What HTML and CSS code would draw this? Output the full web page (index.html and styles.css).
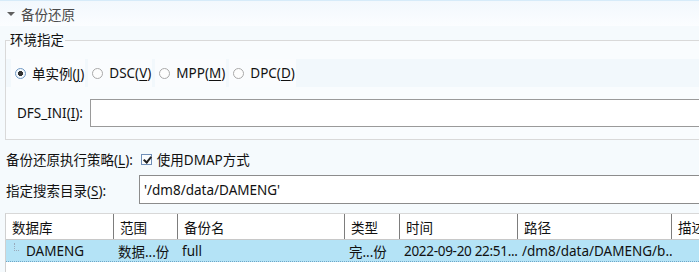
FILE: index.html
```html
<!DOCTYPE html>
<html lang="zh-CN">
<head>
  <meta charset="UTF-8" />
  <title>备份还原</title>
  <link rel="stylesheet" href="styles.css">
</head>
<body>
  <div class="section">
    <div class="section-title"><span class="twisty"></span>备份还原</div>

    <div class="section-body">
      <!-- 环境指定 -->
      <div class="group">
        <div class="group-legend">环境指定</div>
        <div class="radio-row">
          <label class="radio checked"><span class="dot"></span><span>单实例(<u>J</u>)</span></label>
          <label class="radio"><span class="dot"></span><span>DSC(<u>V</u>)</span></label>
          <label class="radio"><span class="dot"></span><span>MPP(<u>M</u>)</span></label>
          <label class="radio"><span class="dot"></span><span>DPC(<u>D</u>)</span></label>
        </div>
        <div class="field-row dfs">
          <span class="field-label">DFS_INI(<u>I</u>):</span>
          <div class="text-input"></div>
        </div>
      </div>

      <div class="field-row strategy">
        <span class="field-label">备份还原执行策略(<u>L</u>):</span>
        <label class="check"><span class="box"></span><span>使用DMAP方式</span></label>
      </div>

      <div class="field-row search">
        <span class="field-label">指定搜索目录(<u>S</u>):</span>
        <div class="text-input">'/dm8/data/DAMENG'</div>
      </div>

      <!-- 备份集列表 -->
      <div class="table">
        <div class="thead">
          <div class="th">数据库</div>
          <div class="th">范围</div>
          <div class="th">备份名</div>
          <div class="th">类型</div>
          <div class="th">时间</div>
          <div class="th">路径</div>
          <div class="th">描述</div>
        </div>
        <div class="tr selected">
          <div class="td first"><span class="tree-line"></span>DAMENG</div>
          <div class="td">数据...份</div>
          <div class="td">full</div>
          <div class="td">完...份</div>
          <div class="td date">2022-09-20 22:51...</div>
          <div class="td">/dm8/data/DAMENG/b..</div>
          <div class="td"></div>
        </div>
      </div>
    </div>
  </div>
</body>
</html>
```

FILE: styles.css
```css
* {
  box-sizing: border-box;
}
body {
  margin: 0;
  width: 699px;
  height: 272px;
  overflow: hidden;
  background: #ffffff;
  font-family: 'Noto Sans', 'Noto Sans CJK SC', sans-serif;
  font-size: 13.5px;
  color: #111111;
}

u {
  text-decoration: underline;
  text-underline-offset: 2px;
}

.section-title {
  height: 26px;
  display: flex;
  align-items: center;
  padding-left: 5px;
  border-top: 1px solid #d6ebf9;
  background: linear-gradient(#f2f8fd, #fbfdff);
  color: #4a4a4a;
}

.twisty {
  width: 0;
  height: 0;
  border-left: 4px solid transparent;
  border-right: 4px solid transparent;
  border-top: 4px solid #606060;
  margin: 1px 6px 0 2px;
}

.section-body {
  background: #f5fafd;
  padding-top: 5px;
}

.group {
  margin-left: 5px;
  margin-top: 9px;
  border: 1px solid #d9d9d9;
  border-right: none;
  background: #f9fcfe;
  height: 100px;
  position: relative;
  padding-top: 18px;
}

.group-legend {
  position: absolute;
  left: 4px;
  top: -11px;
  line-height: 20px;
  padding-right: 1px;
  background: linear-gradient(#f5fafd 50%, #f9fcfe 50%);
}

.radio-row {
  display: flex;
  align-items: center;
  height: 28px;
  padding-left: 5px;
  gap: 3px;
  background: #f2f8fc;
}

.radio {
  display: flex;
  align-items: center;
  gap: 6px;
  height: 28px;
  padding: 0 1px 0 4px;
  background: #fafcfe;
}

.radio .dot {
  width: 11px;
  height: 11px;
  border-radius: 50%;
  border: 1px solid #a9a9a9;
  background: #fdfdfd;
}

.radio.checked .dot {
  border-color: #6f98c4;
  background: radial-gradient(circle, #333 0 2.3px, #f4f8fc 2.8px);
}

.field-row {
  display: flex;
  align-items: center;
}

.dfs {
  margin-top: 12px;
  padding-left: 11px;
}

.dfs .field-label {
  width: 73px;
}

.text-input {
  flex: 1;
  height: 28px;
  border: 1px solid #9a9a9a;
  border-right: none;
  background: #ffffff;
  display: flex;
  align-items: center;
  padding-left: 4px;
}

.strategy {
  height: 30px;
  margin-top: 4px;
  padding-left: 6px;
}

.check {
  display: flex;
  align-items: center;
  gap: 5px;
  margin-left: 8px;
}

.check .box {
  width: 11px;
  height: 11px;
  border: 1px solid #6f8fb8;
  background: #fbfdff;
  position: relative;
}

.check .box::after {
  content: '';
  position: absolute;
  left: 3px;
  top: 0px;
  width: 3px;
  height: 6px;
  border: solid #222;
  border-width: 0 2px 2px 0;
  transform: rotate(40deg);
}

.search {
  height: 29px;
  margin-top: 1px;
  padding-left: 6px;
}

.search .field-label {
  width: 133px;
}

.search .text-input {
  height: 29px;
  border-color: #8c8c8c;
}

.table {
  margin: 9px 0 0 5px;
  height: 60px;
  background: #ffffff;
  border-left: 1px solid #d0d0d0;
  border-top: 1px solid #d8d8d8;
}

.thead, .tr {
  display: grid;
  grid-template-columns: 108px 64px 167px 55px 118px 154px 40px;
}

.thead {
  height: 26px;
  border-bottom: 1px solid #c8c8c8;
}

.th {
  display: flex;
  align-items: center;
  padding-left: 6px;
  border-right: 1px solid #7d7d7d;
  white-space: nowrap;
  overflow: hidden;
}

.tr {
  height: 22px;
}

.tr.selected {
  background: #b4e3f6;
  border-bottom: 1px dotted #6fa7c8;
}

.td {
  display: flex;
  align-items: center;
  padding-left: 4px;
  white-space: nowrap;
  overflow: hidden;
}

.td.first {
  padding-left: 8px;
}

.td.date {
  letter-spacing: -0.3px;
}

.tree-line {
  width: 5px;
  height: 8px;
  border-left: 1px dotted #9ab;
  border-bottom: 1px dotted #9ab;
  margin: -8px 7px 0 0;
}
```
